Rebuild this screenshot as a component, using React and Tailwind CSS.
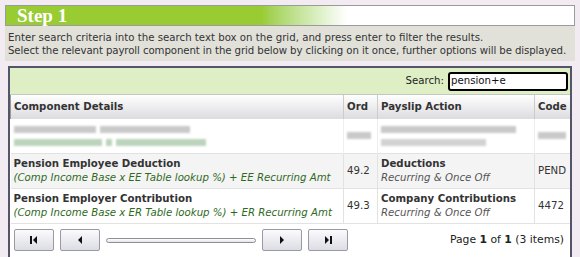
import React from 'react';

const font = { fontFamily: '"DejaVu Sans", Verdana, sans-serif' };

const PagerButton = ({ children }) => (
  <button className="w-[40px] h-[22px] rounded-[2px] border border-[#9a9aa6] bg-gradient-to-b from-[#fbfbfd] to-[#dcdce4] flex items-center justify-center">
    {children}
  </button>
);

const Blur = ({ w, c = 'bg-[#c9c9c9]' }) => (
  <div className={`h-[7px] ${c} blur-[1px]`} style={{ width: w }} />
);

const App = () => {
  return (
    <div className="w-[580px] h-[257px] overflow-hidden bg-[#f2ecf2] pt-[5px] px-[5px] text-[10.2px] text-[#333]" style={font}>
      <div className="h-[21px] border border-[#9b9b9b] bg-gradient-to-r from-[#99cc33] via-[#99cc33] via-[45%] to-white to-[60%] flex items-center pl-[11px]">
        <span className="text-white font-bold text-[19px] leading-none" style={{ fontFamily: '"Liberation Serif", Georgia, serif' }}>Step 1</span>
      </div>
      <div className="bg-[#e1e1da] px-[3px] pt-[5px] pb-[4px] leading-[13px] text-[#333] whitespace-nowrap">
        <div>Enter search criteria into the search text box on the grid, and press enter to filter the results.</div>
        <div className="tracking-[-0.1px]">Select the relevant payroll component in the grid below by clicking on it once, further options will be displayed.</div>
      </div>
      <div className="mx-[3px] mt-[5px] border-2 border-[#55556a] bg-white">
        <div className="h-[27px] bg-[#dfefc5] border-b border-[#c4c8c0] flex items-center justify-end pr-[2px] gap-[4px]">
          <span className="text-[#222]">Search:</span>
          <div className="w-[120px] h-[19px] border-2 border-black rounded-[3px] bg-white flex items-center pl-[1px] text-[#111]">pension+e</div>
        </div>
        <table className="w-full border-collapse table-fixed">
          <colgroup>
            <col className="w-[333px]" />
            <col className="w-[34px]" />
            <col className="w-[157px]" />
            <col />
          </colgroup>
          <thead>
            <tr className="h-[24px] bg-gradient-to-b from-white to-[#dcdce0] text-left text-[#333]">
              <th className="pl-[3px] font-bold border-l border-[#999]">Component Details</th>
              <th className="pl-[3px] font-bold border-l border-[#ccc]">Ord</th>
              <th className="pl-[3px] font-bold border-l border-[#ccc]">Payslip Action</th>
              <th className="pl-[3px] font-bold border-l border-[#ccc]">Code</th>
            </tr>
          </thead>
          <tbody>
            <tr className="h-[34px] border-b border-[#e2e2e2] bg-white">
              <td className="pl-[3px]">
                <div className="flex gap-[4px] mb-[6px]">
                  <Blur w={82} />
                  <Blur w={90} />
                </div>
                <div className="flex gap-[4px]">
                  <Blur w={88} c="bg-[#bcd4bc]" />
                  <Blur w={6} c="bg-[#bcd4bc]" />
                  <Blur w={90} c="bg-[#bcd4bc]" />
                </div>
              </td>
              <td className="pl-[3px] border-l border-[#eee]"><Blur w={24} /></td>
              <td className="pl-[3px] border-l border-[#eee]">
                <div className="mb-[6px]"><Blur w={135} /></div>
                <Blur w={105} c="bg-[#d2d2d2]" />
              </td>
              <td className="pl-[3px] border-l border-[#eee]"><Blur w={28} /></td>
            </tr>
            <tr className="h-[35px] border-b border-[#e2e2e2] bg-[#f4f4f4]">
              <td className="pl-[3px] leading-[14px]">
                <div className="font-bold">Pension Employee Deduction</div>
                <div className="italic text-[#2e6a1c]">(Comp Income Base x EE Table lookup %) + EE Recurring Amt</div>
              </td>
              <td className="pl-[3px] border-l border-[#e2e2e2]">49.2</td>
              <td className="pl-[3px] border-l border-[#e2e2e2] leading-[14px]">
                <div className="font-bold">Deductions</div>
                <div className="italic text-[#555]">Recurring &amp; Once Off</div>
              </td>
              <td className="pl-[3px] border-l border-[#e2e2e2]">PEND</td>
            </tr>
            <tr className="h-[35px] border-b border-[#e2e2e2] bg-white">
              <td className="pl-[3px] leading-[14px]">
                <div className="font-bold">Pension Employer Contribution</div>
                <div className="italic text-[#2e6a1c]">(Comp Income Base x ER Table lookup %) + ER Recurring Amt</div>
              </td>
              <td className="pl-[3px] border-l border-[#e2e2e2]">49.3</td>
              <td className="pl-[3px] border-l border-[#e2e2e2] leading-[14px]">
                <div className="font-bold">Company Contributions</div>
                <div className="italic text-[#555]">Recurring &amp; Once Off</div>
              </td>
              <td className="pl-[3px] border-l border-[#e2e2e2]">4472</td>
            </tr>
          </tbody>
        </table>
        <div className="h-[33px] flex items-center px-[4px] gap-[6px]">
          <PagerButton>
            <svg width="10" height="10" viewBox="0 0 10 10"><rect x="1" y="1" width="2" height="8" fill="#111" /><path d="M8 1 L4 5 L8 9 Z" fill="#111" /></svg>
          </PagerButton>
          <PagerButton>
            <svg width="10" height="10" viewBox="0 0 10 10"><path d="M7 1 L3 5 L7 9 Z" fill="#111" /></svg>
          </PagerButton>
          <div className="w-[150px] h-[5px] rounded-full border border-[#8e8e96] bg-gradient-to-b from-white to-[#e4e4e8]" />
          <PagerButton>
            <svg width="10" height="10" viewBox="0 0 10 10"><path d="M3 1 L7 5 L3 9 Z" fill="#111" /></svg>
          </PagerButton>
          <PagerButton>
            <svg width="10" height="10" viewBox="0 0 10 10"><path d="M2 1 L6 5 L2 9 Z" fill="#111" /><rect x="7" y="1" width="2" height="8" fill="#111" /></svg>
          </PagerButton>
          <div className="ml-auto text-[#222] text-[10.8px] pr-[2px]">
            Page <b>1</b> of <b>1</b> (3 items)
          </div>
        </div>
      </div>
    </div>
  );
};

export default App;
